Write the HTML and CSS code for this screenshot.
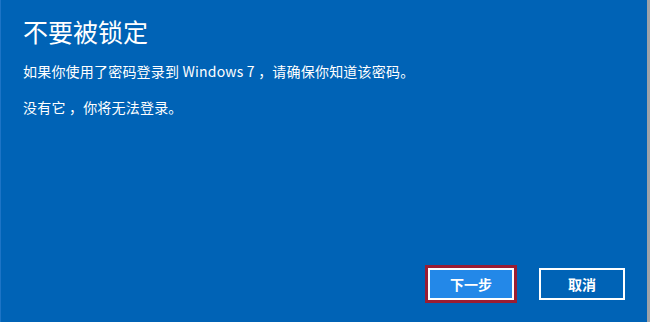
FILE: index.html
```html
<!DOCTYPE html>
<html lang="zh-CN">
<head>
    <meta charset="UTF-8">
    <title>不要被锁定</title>
    <link rel="stylesheet" href="styles.css">
</head>
<body>
    <div class="dialog">
        <h1>不要被锁定</h1>
        <p>如果你使用了密码登录到 Windows 7 ，请确保你知道该密码。</p>
        <p>没有它 ，你将无法登录。</p>

        <div class="actions">
            <button class="btn btn-primary">下一步</button>
            <button class="btn">取消</button>
        </div>
    </div>
</body>
</html>
```

FILE: styles.css
```css
* {
    box-sizing: border-box;
}

body {
    margin: 0;
    padding: 0;
    font-family: "Noto Sans CJK SC", "Noto Sans", sans-serif;
    background-color: #0063b6;
}

.dialog {
    display: flex;
    flex-direction: column;
    height: 322px;
    padding: 16px 22px 22px 22px;
    background-color: #0063b6;
    color: white;
    border-left: 1px solid #1d74c6;
    border-right: 3px solid #9ea3a8;
}

.dialog h1 {
    margin: 0 0 15px;
    font-size: 25px;
    font-weight: normal;
    line-height: 30px;
}

.dialog p {
    margin: 0 0 16px;
    font-size: 14px;
    line-height: 20px;
    letter-spacing: 0.2px;
}

.actions {
    display: flex;
    justify-content: flex-end;
    gap: 25px;
    margin-top: auto;
}

.btn {
    width: 86px;
    height: 32px;
    background: transparent;
    border: 2px solid white;
    color: white;
    font-family: "Noto Sans CJK SC", sans-serif;
    font-size: 14px;
    font-weight: bold;
    padding: 0;
}

.btn-primary {
    background-color: #2388e8;
    outline: 3px solid #9a1d33;
}
```
